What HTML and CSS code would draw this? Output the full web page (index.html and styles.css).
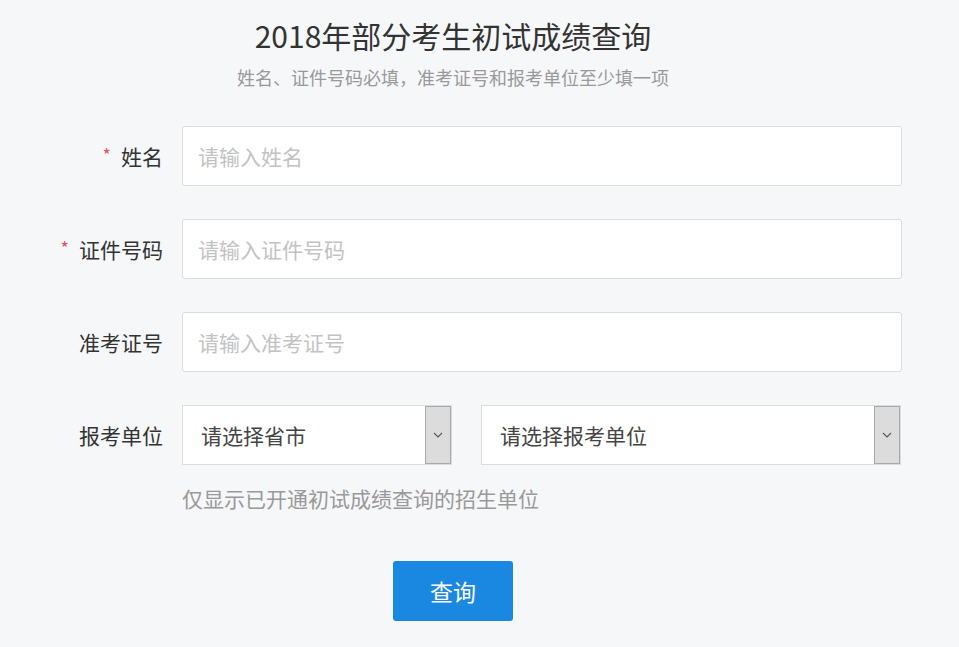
FILE: index.html
```html
<!DOCTYPE html>
<html lang="zh-CN">
<head>
  <meta charset="UTF-8">
  <meta name="viewport" content="width=device-width, initial-scale=1.0">
  <title>2018年部分考生初试成绩查询</title>
  <link rel="stylesheet" href="styles.css">
</head>
<body>

<section class="query-page">
  <h1 class="query-title">2018年部分考生初试成绩查询</h1>
  <p class="query-subtitle">姓名、证件号码必填，准考证号和报考单位至少填一项</p>

  <form class="query-form" onsubmit="return false;">
    <div class="form-row">
      <label class="form-label"><span class="required">*</span>姓名</label>
      <input class="form-input" placeholder="请输入姓名">
    </div>
    <div class="form-row">
      <label class="form-label"><span class="required">*</span>证件号码</label>
      <input class="form-input" placeholder="请输入证件号码">
    </div>
    <div class="form-row">
      <label class="form-label">准考证号</label>
      <input class="form-input" placeholder="请输入准考证号">
    </div>
    <div class="form-row">
      <label class="form-label">报考单位</label>
      <div class="select-group">
        <div class="select-box select-province">
          <select>
            <option>请选择省市</option>
          </select>
          <span class="select-arrow">
            <svg width="10" height="6" viewBox="0 0 10 6"><path d="M1 1 L5 5 L9 1" fill="none" stroke="#555" stroke-width="1.1"/></svg>
          </span>
        </div>
        <div class="select-box select-unit">
          <select>
            <option>请选择报考单位</option>
          </select>
          <span class="select-arrow">
            <svg width="10" height="6" viewBox="0 0 10 6"><path d="M1 1 L5 5 L9 1" fill="none" stroke="#555" stroke-width="1.1"/></svg>
          </span>
        </div>
      </div>
    </div>
    <div class="form-row form-row-hint">
      <span></span>
      <p class="form-hint">仅显示已开通初试成绩查询的招生单位</p>
    </div>
    <div class="form-foot">
      <button class="btn-query">查询</button>
    </div>
  </form>
</section>

</body>
</html>
```

FILE: styles.css
```css
/* page */
body {
  margin: 0;
  background-color: #f6f7f9;
  font-family: "Noto Sans CJK SC", "Noto Sans", sans-serif;
  color: #333;
}
.query-page {
  width: 906px;
  padding-top: 15px;
}
.query-title {
  margin: 0;
  font-size: 30px;
  font-weight: normal;
  line-height: 40px;
  text-align: center;
  color: #333;
}
.query-subtitle {
  margin: 10px 0 0;
  font-size: 18px;
  line-height: 24px;
  text-align: center;
  color: #999;
}

/* form */
.query-form {
  margin-top: 37px;
}
.form-row {
  display: grid;
  grid-template-columns: 163px 720px;
  column-gap: 19px;
  align-items: center;
  margin-bottom: 33px;
}
.form-label {
  font-size: 21px;
  line-height: 30px;
  text-align: right;
  color: #333;
}
.required {
  color: #e0545a;
  font-size: 18px;
  margin-right: 10px;
  position: relative;
  top: -3px;
}
.form-input {
  box-sizing: border-box;
  height: 60px;
  width: 100%;
  padding: 0 15px;
  border: 1px solid #dcdcdc;
  border-radius: 3px;
  background-color: #fff;
  font-family: inherit;
  font-size: 21px;
  color: #333;
  outline: none;
}
.form-input::placeholder {
  color: #c3c3c3;
}

/* selects */
.select-group {
  display: flex;
  gap: 29px;
}
.select-box {
  box-sizing: border-box;
  display: flex;
  height: 60px;
  border: 1px solid #dcdcdc;
  background-color: #fff;
}
.select-province {
  width: 270px;
}
.select-unit {
  width: 420px;
}
.select-box select {
  flex: 1;
  min-width: 0;
  border: none;
  background: transparent;
  appearance: none;
  -webkit-appearance: none;
  padding: 0 18px;
  font-family: inherit;
  font-size: 21px;
  color: #444;
  outline: none;
}
.select-arrow {
  box-sizing: border-box;
  width: 26px;
  height: 58px;
  display: flex;
  align-items: center;
  justify-content: center;
  background-color: #dcdcdc;
  border: 1px solid #a9a9a9;
}

.form-row-hint {
  margin-top: -12px;
  margin-bottom: 0;
}
.form-hint {
  margin: 0;
  font-size: 21px;
  line-height: 24px;
  color: #999;
}

/* button */
.form-foot {
  display: flex;
  justify-content: center;
  margin-top: 51px;
}
.btn-query {
  width: 120px;
  height: 60px;
  border: none;
  border-radius: 3px;
  background-color: #1a88e1;
  color: #fff;
  font-family: inherit;
  font-size: 23px;
  cursor: pointer;
}
```
